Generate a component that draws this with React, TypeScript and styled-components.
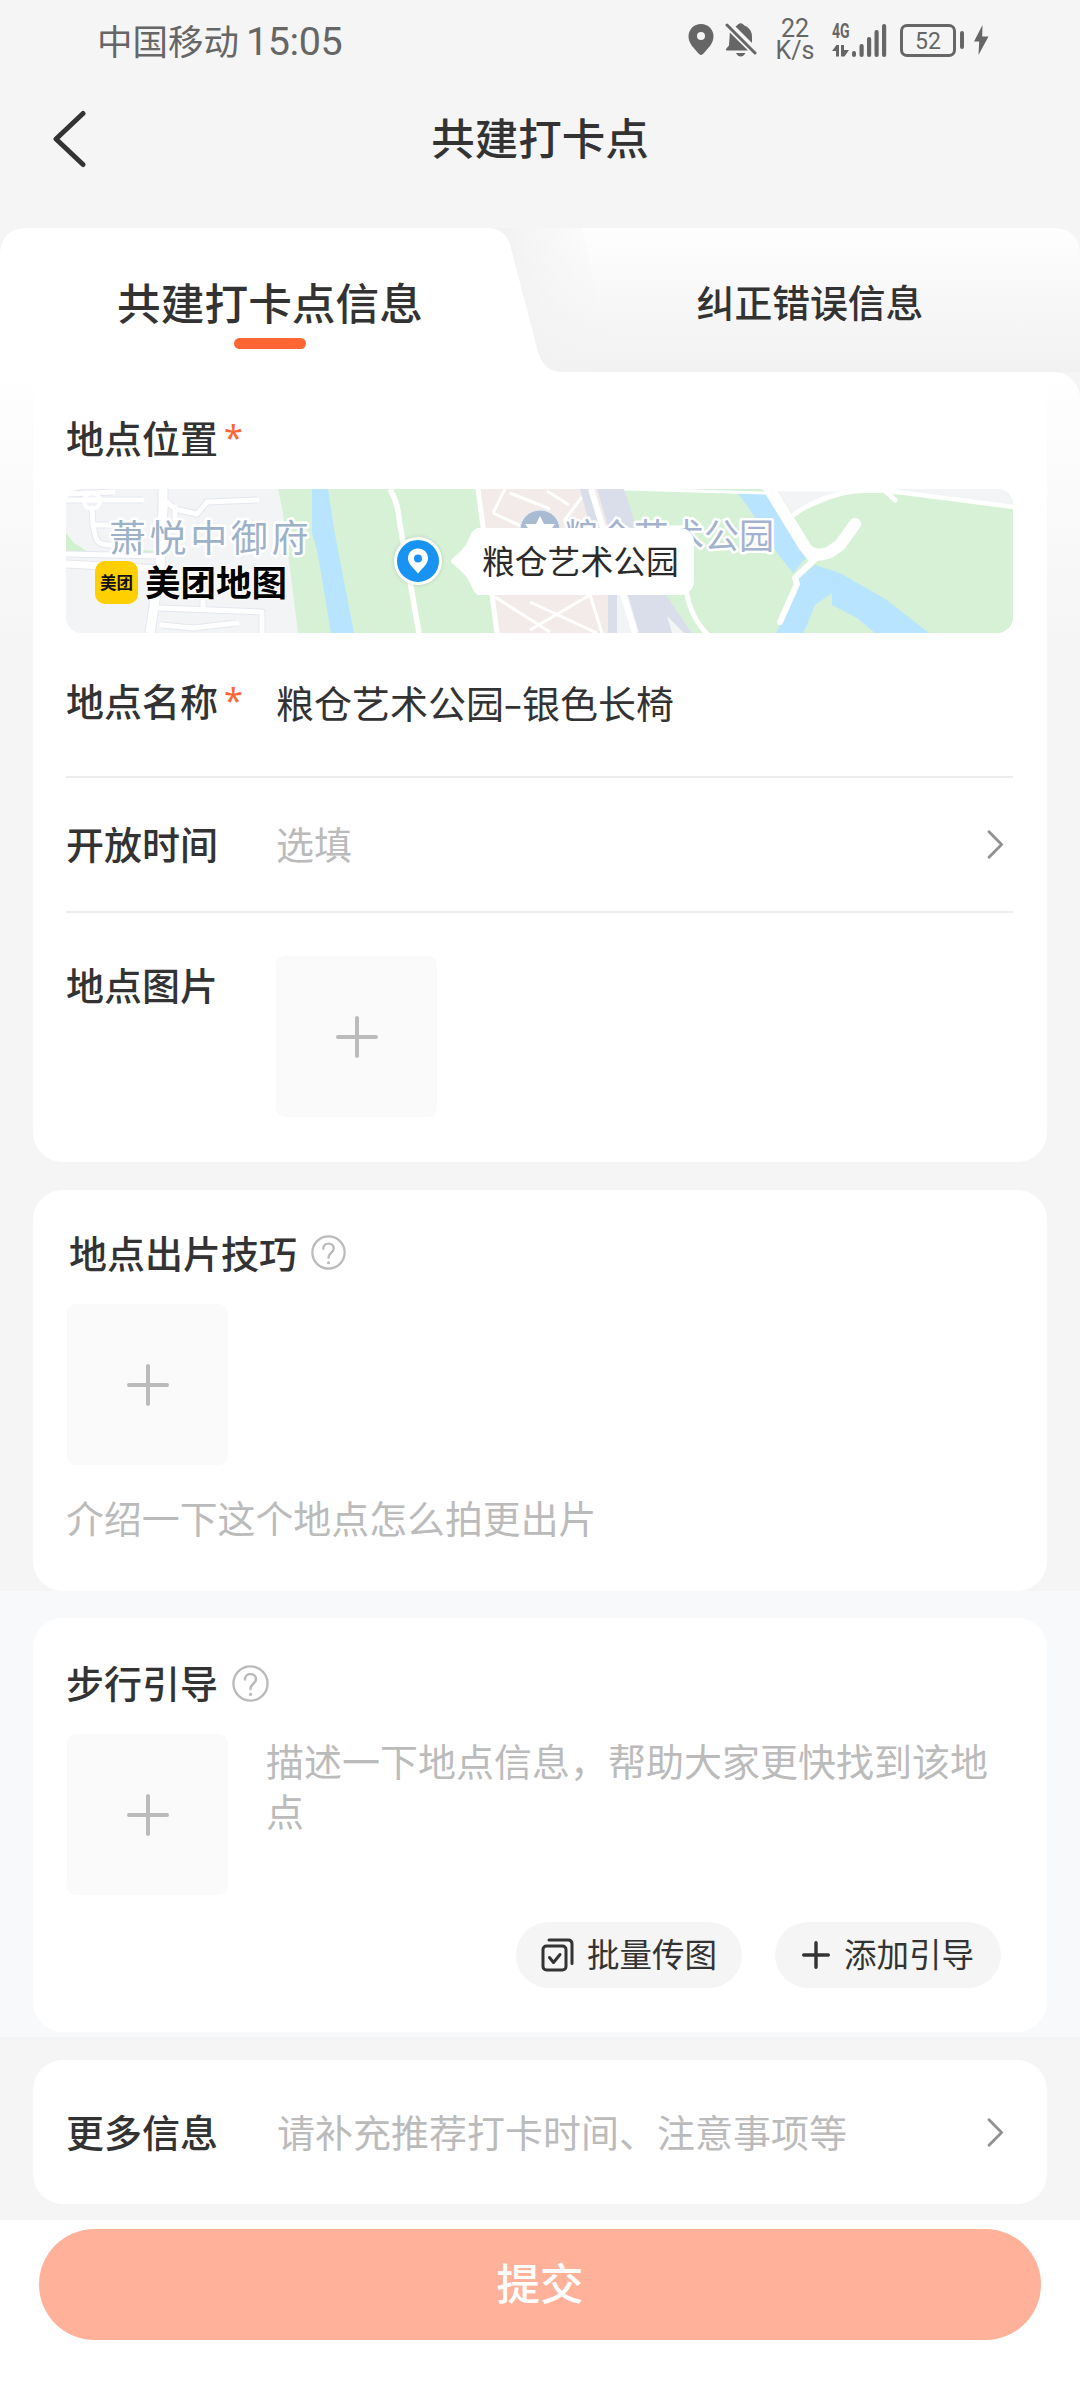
import React from "react";
import styled, { createGlobalStyle } from "styled-components";

const INK = "#333333";
const HINT = "#bbbbbb";
const BRAND = "#ff6633";
const GREY = "#666666";

const GlobalStyle = createGlobalStyle`
  *, *::before, *::after { box-sizing: border-box; }
  body {
    margin: 0;
    background: #ffffff;
    font-family: "Noto Sans CJK SC", "Noto Sans", sans-serif;
    color: ${INK};
  }
  button { font: inherit; color: inherit; border: 0; padding: 0; background: none; }
  svg { display: block; flex: none; }
`;

const Page = styled.div`
  width: 1080px;
  height: 2400px;
  display: flex;
  flex-direction: column;
  background: #f5f5f5;
  overflow: hidden;
`;

/* ---------- status bar ---------- */

const StatusBar = styled.header`
  display: flex;
  justify-content: space-between;
  height: 80px;
  padding: 0 91px 0 97px;
  color: ${GREY};
`;

const Carrier = styled.div`
  display: flex;
  align-items: center;
  gap: 7px;
  font-size: 35.5px;
  line-height: 78px;
`;

const Clock = styled.span`
  font-family: Roboto, sans-serif;
  font-size: 39.5px;
  padding-top: 4px;
  letter-spacing: -0.4px;
`;

const StatusIcons = styled.div`
  display: flex;
  height: 80px;
  align-items: center;
`;

const NetSpeed = styled.div`
  width: 44px;
  margin: 0 15px 0 16px;
  font-family: Roboto, sans-serif;
  font-size: 25px;
  line-height: 22px;
  text-align: center;
  white-space: nowrap;
`;

const Signal = styled.div`
  display: flex;
  align-items: flex-end;
  gap: 2px;
  height: 34px;
  margin-right: 13px;
`;

const Network = styled.div`
  display: flex;
  flex-direction: column;
  align-items: flex-start;
  gap: 6px;
  width: 17px;
`;

const NetworkName = styled.span`
  font-family: Roboto, sans-serif;
  font-size: 20px;
  font-weight: 700;
  line-height: 16px;
  transform: scaleX(0.7);
  transform-origin: left;
`;

const Battery = styled.div`
  display: flex;
  align-items: center;
  gap: 4px;
  margin-right: 9px;
`;

const BatteryBody = styled.div`
  width: 56px;
  height: 33px;
  border: 3px solid ${GREY};
  border-radius: 7px;
  font-family: Roboto, sans-serif;
  font-size: 23px;
  line-height: 29px;
  text-align: center;
`;

const BatteryCap = styled.div`
  width: 4px;
  height: 18px;
  border-radius: 2px;
  background: ${GREY};
`;

/* ---------- navigation ---------- */

const NavBar = styled.nav`
  display: grid;
  grid-template-columns: 120px 1fr 120px;
  height: 148px;
`;

const BackButton = styled.button`
  display: flex;
  align-items: flex-start;
  padding: 30px 0 0 50px;
`;

const NavTitle = styled.h1`
  margin: 0;
  text-align: center;
  font-size: 43.5px;
  line-height: 114px;
  font-weight: 500;
`;

const Tabs = styled.div`
  display: flex;
  position: relative;
  height: 144px;
  flex: none;
`;

const TabShape = styled.svg`
  position: absolute;
  left: 0;
  top: 0;
`;

const Tab = styled.button<{ $active?: boolean }>`
  position: relative;
  width: 540px;
  display: flex;
  flex-direction: column;
  align-items: center;
  font-weight: 500;
  font-size: ${(p) => (p.$active ? "43.7px" : "37.8px")};
  line-height: 60px;
  padding-top: 43px;
  text-align: center;
`;

const TabUnderline = styled.span`
  width: 72px;
  height: 11px;
  margin-top: 7px;
  border-radius: 6px;
  background: ${BRAND};
`;

/* ---------- form ---------- */

const Form = styled.main`
  flex: none;
  height: 1848px;
  border-top-right-radius: 26px;
  background: linear-gradient(#ffffff 0, #fefefe 14px, #f5f5f5 270px);
`;

const Card = styled.section<{ $h: number; $flat?: boolean }>`
  display: flex;
  flex-direction: column;
  height: ${(p) => p.$h}px;
  margin: 0 33px;
  padding: 0 34px 0 33px;
  border-radius: ${(p) => (p.$flat ? "0 0 30px 30px" : "30px")};
  background: #ffffff;
`;

const Gap = styled.div<{ $h: number }>`
  height: ${(p) => p.$h}px;
`;

const TintBand = styled.div`
  height: 446px;
  padding-top: 27px;
  background: #f7f9fb;
`;

const Label = styled.div<{ $w?: number }>`
  display: flex;
  width: ${(p) => (p.$w ? `${p.$w}px` : "auto")};
  flex: none;
  font-size: 38px;
  line-height: 56px;
  font-weight: 500;
  white-space: nowrap;
`;

const Required = styled.span`
  margin-left: 6px;
  font-family: "Noto Sans", sans-serif;
  font-size: 34px;
  line-height: 56px;
  font-weight: 400;
  color: ${BRAND};
`;

const LocationHead = styled.div`
  height: 117px;
  padding-top: 37px;
`;

const Row = styled.div<{ $h: number; $top: number; $line?: boolean }>`
  display: flex;
  align-items: flex-start;
  height: ${(p) => p.$h}px;
  padding-top: ${(p) => p.$top}px;
  border-bottom: ${(p) => (p.$line ? "2px solid #ededed" : "0")};
`;

const Value = styled.div<{ $hint?: boolean; $down?: number }>`
  flex: 1;
  padding-top: ${(p) => p.$down ?? 0}px;
  font-size: 38px;
  line-height: 56px;
  white-space: nowrap;
  color: ${(p) => (p.$hint ? HINT : INK)};
`;

const Dash = styled.span`
  display: inline-block;
  width: 18px;
  text-align: center;
  transform: scaleX(1.5);
`;

const ArrowSlot = styled.div`
  padding: 15px 9px 0 0;
`;

const UploadBox = styled.button`
  display: flex;
  align-items: center;
  justify-content: center;
  flex: none;
  width: 161px;
  height: 161px;
  border-radius: 9px;
  background: #fafafa;
`;

const SectionHead = styled.div<{ $top: number; $h: number; $left?: number }>`
  display: flex;
  align-items: flex-start;
  gap: 14px;
  height: ${(p) => p.$h}px;
  padding: ${(p) => p.$top}px 0 0 ${(p) => p.$left ?? 0}px;
`;

const HelpSlot = styled.div`
  padding-top: 11px;
`;

const TipText = styled.p`
  margin: 24px 0 0;
  font-size: 37.9px;
  line-height: 56px;
  color: ${HINT};
`;

const GuideRow = styled.div`
  display: flex;
  gap: 38px;
  padding-left: 1px;
`;

const GuideText = styled.p`
  margin: 1px 0 0;
  width: 730px;
  font-size: 38px;
  line-height: 50px;
  color: ${HINT};
  word-break: break-all;
`;

const GuideActions = styled.div`
  display: flex;
  justify-content: flex-end;
  gap: 33px;
  margin: 27px 12px 0 0;
`;

const Pill = styled.button<{ $gap: number }>`
  display: flex;
  align-items: center;
  justify-content: center;
  gap: ${(p) => p.$gap}px;
  width: 226px;
  height: 66px;
  border-radius: 33px;
  background: #f5f5f5;
  font-size: 32.5px;
  line-height: 60px;
  white-space: nowrap;
`;

const PillText = styled.span`
  height: 64px;
`;

/* ---------- map ---------- */

const MapBox = styled.div`
  position: relative;
  width: 947px;
  height: 144px;
  border-radius: 16px;
  overflow: hidden;
  background: #f3f4f6;
`;

const MapLogo = styled.div`
  position: absolute;
  left: 29px;
  top: 72px;
  display: flex;
  align-items: center;
  gap: 7px;
`;

const LogoTile = styled.span`
  width: 43px;
  height: 43px;
  border-radius: 10px;
  background: #ffcf00;
  color: #111111;
  font-size: 16.5px;
  font-weight: 700;
  line-height: 42px;
  text-align: center;
`;

const LogoName = styled.span`
  font-size: 35.5px;
  line-height: 40px;
  font-weight: 700;
  color: #000000;
  margin-top: -4px;
  text-shadow: 0 0 3px #fff, 0 0 3px #fff, 0 0 2px #fff;
`;

const MapPin = styled.div`
  position: absolute;
  left: 328px;
  top: 48px;
  width: 48px;
  height: 48px;
  display: flex;
  align-items: center;
  justify-content: center;
  border: 3px solid #ffffff;
  border-radius: 50%;
  background: #1893f2;
  box-shadow: 0 0 4px rgba(0, 0, 0, 0.15);
`;

const Bubble = styled.div`
  position: absolute;
  left: 385px;
  top: 39px;
  display: flex;
  height: 67px;
`;

const BubbleText = styled.span`
  width: 216px;
  padding-left: 4px;
  border-radius: 0 14px 14px 0;
  background: #ffffff;
  color: #2b2b2b;
  font-size: 32.8px;
  line-height: 63px;
  white-space: nowrap;
`;

/* ---------- footer ---------- */

const Footer = styled.footer`
  flex: 1;
  padding: 9px 39px 0;
  background: #ffffff;
`;

const Submit = styled.button`
  width: 1002px;
  height: 111px;
  border-radius: 56px;
  background: #ffb299;
  color: #ffffff;
  font-size: 43.5px;
  line-height: 106px;
  font-weight: 500;
  padding-bottom: 5px;
`;

const PlusIcon = ({ size, weight, color }: { size: number; weight: number; color: string }) => (
  <svg width={size} height={size} viewBox={`0 0 ${size} ${size}`}>
    <path
      d={`M${size / 2} ${weight / 2}V${size - weight / 2}M${weight / 2} ${size / 2}H${size - weight / 2}`}
      stroke={color}
      strokeWidth={weight}
      strokeLinecap="round"
    />
  </svg>
);

const HelpIcon = ({ size }: { size: number }) => (
  <svg width={size} height={size} viewBox="0 0 36 36" fill="none" stroke={HINT} strokeLinecap="round">
    <circle cx="18" cy="18" r="16.6" strokeWidth="2.3" />
    <path d="M12.6 14.2C12.6 10.8 14.8 8.8 18 8.8S23.4 11 23.4 13.8C23.4 18 18 18.2 18 23.4" strokeWidth="2.4" />
    <circle cx="18" cy="28.6" r="1.6" fill={HINT} stroke="none" />
  </svg>
);

const Arrow = () => (
  <svg width="17" height="29" viewBox="0 0 17 29" fill="none">
    <path d="M2 1.8L14.6 14.5L2 27.2" stroke="#919191" strokeWidth="2.8" strokeLinecap="round" strokeLinejoin="round" />
  </svg>
);

const Upload = () => (
  <UploadBox>
    <PlusIcon size={42} weight={4} color={HINT} />
  </UploadBox>
);

const PinGlyph = () => (
  <svg width="22" height="26" viewBox="0 0 22 26">
    <path
      fillRule="evenodd"
      fill="#fff"
      d="M11 .5C5.2.5 1 4.800 1 10.200C1 16 6.500 19.800 11 25.500C15.500 19.800 21 16 21 10.200C21 4.800 16.800.5 11 .5ZM11 6.500A4 4 0 1 1 11 14.500A4 4 0 1 1 11 6.500Z"
    />
  </svg>
);

const leftRoads = [
  "M0 11H76",
  "M0 5L47 3",
  "M26 19Q27 44 31 51Q34 56 44 56",
  "M27 36H46",
  "M101 13L109 20L131 25L141 13L191 11",
  "M109 18V34",
  "M94 119L196 123V144",
  "M137 108V119",
  "M96 136L127 139L171 134",
  "M0 65L94 67",
];

const MapArt = () => (
  <svg width="947" height="144" viewBox="0 0 947 144" fill="none">
    <rect width="947" height="144" fill="#f3f4f6" />
    <path d="M0 44L8 54L22 63H0ZM70 60L88 62V66H70Z" fill="#d2efd0" />
    <g stroke="#e4e7ee" strokeWidth="7" strokeLinejoin="round">
      {leftRoads.map((d) => (
        <path key={d} d={d} />
      ))}
    </g>
    <path d="M97 0L97 20L94 78L84 144" stroke="#e4e7ee" strokeWidth="11" />
    <path d="M0 75L96 80" stroke="#e4e7ee" strokeWidth="9" />
    <circle cx="26" cy="12" r="8" fill="#f0f1f4" stroke="#fff" strokeWidth="4" />
    <g stroke="#fff" strokeWidth="5" strokeLinejoin="round" strokeLinecap="round">
      {leftRoads.map((d) => (
        <path key={d} d={d} />
      ))}
    </g>
    <path d="M97 0L97 20L94 78L84 144" stroke="#fff" strokeWidth="9" />
    <path d="M0 75L96 80" stroke="#fff" strokeWidth="7" />

    <path d="M212 0L217 24L232 144H431L412 0Z" fill="#d7f1d6" />
    <path d="M246 0H262L268 40L288 144H265L251 61L246 44Z" fill="#b8e4ff" />
    <path d="M324 0Q332 14 333 30L346 104L353 144" stroke="#fff" strokeWidth="5.500" />

    <path d="M412 0H540L590 144H431Z" fill="#f3ebe9" />
    <path d="M439 0L427 24M444 4L484 20M481 2L503 16M516 8L498 32M427 24L470 44" stroke="#fff" strokeWidth="3" />
    <path d="M429 108L484 143M464 113L531 144M464 141L524 106L536 144" stroke="#fff" strokeWidth="3" />
    <path d="M412 0L431 144" stroke="#fff" strokeWidth="5" />
    <path d="M514 0H523L551 100V144H542V106Z" fill="#d9deea" />
    <path d="M551 106H566L575 144H551Z" fill="#f3f4f6" />
    <path d="M531 0H560L601 106L626 144H573Z" fill="#d9deea" />
    <path d="M525 0L569 144" stroke="#fff" strokeWidth="6" />
    <path d="M601 127L618 144H606Z" fill="#f3f4f6" />

    <path d="M558 0H947V144H626L600 106L572 42Z" fill="#d7f1d6" />
    <path d="M711 0H947V18L830 4L780 4L727 26Z" fill="#f3f4f6" />
    <path d="M671 3L700 3L740 69L727 84L711 64L697 41L682 18Z" fill="#b8e4ff" />
    <path
      d="M749 76L774 84L821 111L863 144H809L791 129L766 116V104L749 116L741 136L737 144H710L717 131L731 91Z"
      fill="#b8e4ff"
    />
    <path d="M558 0L700 4" stroke="#fff" strokeWidth="3" />
    <path d="M700 1H830" stroke="#fff" strokeWidth="3" />
    <path d="M725 28Q745 12 770 6Q795 -1 830 3Q880 9 947 18" stroke="#fff" strokeWidth="4.500" />
    <path d="M817 0L829 11" stroke="#fff" strokeWidth="5" strokeLinecap="round" />
    <path d="M701 -4L739 58Q747 70 764 63L774 56L789 35" stroke="#fff" strokeWidth="12" strokeLinecap="round" strokeLinejoin="round" />
    <path d="M738 66L750 66L752 72L746 76Z" fill="#fff" />
    <path d="M746 73L729 89L731 95L714 133" stroke="#fff" strokeWidth="6" strokeLinecap="round" strokeLinejoin="round" />
    <path d="M620 100Q624 128 642 146" stroke="#fff" strokeWidth="5" />

    <circle cx="474" cy="41" r="20" fill="#a9bad3" stroke="#e9edf3" />
    <path d="M474 27L478 35L489 35L483 43H465L459 35L470 35Z" fill="#fff" />
    <g fontFamily="Noto Sans CJK SC, sans-serif" stroke="#fff" strokeWidth="5" strokeLinejoin="round" paintOrder="stroke">
      <text x="43" y="62.500" fontSize="37" letterSpacing="3.600" fill="#9db2c8">萧悦中御府</text>
      <text x="498" y="59.500" fontSize="35" fill="#a3b3cf">粮仓艺术公园</text>
    </g>
  </svg>
);

const LocationMap = () => (
  <MapBox>
    <MapArt />
    <MapLogo>
      <LogoTile>美团</LogoTile>
      <LogoName>美团地图</LogoName>
    </MapLogo>
    <MapPin>
      <PinGlyph />
    </MapPin>
    <Bubble>
      <svg width="27" height="67" viewBox="0 0 27 67">
        <path d="M27 0Q22 1 19 8Q16 17 9 24L1 31Q-1 33 1 35L9 42Q16 48 20 57Q23 65 27 67Z" fill="#fff" />
      </svg>
      <BubbleText>粮仓艺术公园</BubbleText>
    </Bubble>
  </MapBox>
);

const StatusGlyphs = () => (
  <StatusIcons>
    <svg width="26" height="34" viewBox="0 0 26 34">
      <path
        fillRule="evenodd"
        fill={GREY}
        d="M13 1C6 1 .5 6.500 .5 13.300C.5 21 6.500 25.500 10.500 30.600Q13 33.500 15.500 30.600C19.500 25.500 25.500 21 25.500 13.300C25.500 6.500 20 1 13 1ZM13 9A4 4 0 1 1 13 17A4 4 0 1 1 13 9Z"
      />
    </svg>
    <svg width="32" height="36" viewBox="0 0 32 36" style={{ marginLeft: 11 }}>
      <path d="M2 3L30 31" stroke={GREY} strokeWidth="3" strokeLinecap="round" />
      <path d="M4.800 10.500L23 28.600H1.500Q0 27.500 1.600 26.300L4 23.500Q4.600 16 4.800 10.500Z" fill={GREY} />
      <path d="M10.500 4.500Q12.500 3.300 13.200 2.200Q15.500 .2 18 2.200Q19 3.600 21.500 4.600Q27 8 27 15V21Z" fill={GREY} />
      <path d="M11 31H20.500Q18.500 34.500 15.700 34.500T11 31Z" fill={GREY} />
    </svg>
    <NetSpeed>
      22
      <br />
      K/s
    </NetSpeed>
    <Signal>
      <Network>
        <NetworkName>4G</NetworkName>
        <svg width="17" height="12" viewBox="0 0 17 12" fill={GREY}>
          <path d="M0 6L4.500 0H7V11.500H4V6ZM9 0H12V5H17L12.500 11.500H9Z" />
        </svg>
      </Network>
      <svg width="36" height="33" viewBox="0 0 36 33" fill={GREY}>
        <rect x="1" y="27" width="4" height="6" rx="2" />
        <rect x="8.500" y="20" width="4.200" height="13" rx="2" />
        <rect x="16" y="13" width="4.200" height="20" rx="2" />
        <rect x="23.500" y="6" width="4.200" height="27" rx="2" />
        <rect x="31" y="0" width="4.200" height="33" rx="2" />
      </svg>
    </Signal>
    <Battery>
      <BatteryBody>52</BatteryBody>
      <BatteryCap />
    </Battery>
    <svg width="16" height="30" viewBox="0 0 16 30">
      <path d="M9.500 0L1 16.500H6.200L5.500 30L15.500 11.500H9.200Z" fill={GREY} />
    </svg>
  </StatusIcons>
);

export default function App() {
  return (
    <>
      <GlobalStyle />
      <Page>
        <StatusBar>
          <Carrier>
            中国移动<Clock>15:05</Clock>
          </Carrier>
          <StatusGlyphs />
        </StatusBar>

        <NavBar>
          <BackButton aria-label="返回">
            <svg width="38" height="58" viewBox="0 0 38 58" fill="none">
              <path d="M33 3.500L6 29L33 54.500" stroke={INK} strokeWidth="5" strokeLinecap="round" strokeLinejoin="round" />
            </svg>
          </BackButton>
          <NavTitle>共建打卡点</NavTitle>
        </NavBar>

        <Tabs>
          <TabShape width="1080" height="176" viewBox="0 0 1080 176">
            <defs>
              <linearGradient id="idle" x1="0" y1="0" x2="0" y2="1">
                <stop offset="0" stopColor="#fefefe" />
                <stop offset="1" stopColor="#f1f1f1" />
              </linearGradient>
              <linearGradient id="shade" x1="0" y1="0" x2="1" y2="0">
                <stop offset="0" stopColor="#f0f0f0" />
                <stop offset="1" stopColor="#f4f4f4" stopOpacity="0" />
              </linearGradient>
            </defs>
            <path d="M490 0H1052Q1080 0 1080 28V144H490Z" fill="url(#idle)" />
            <path d="M490 0H582L615 144H530Z" fill="url(#shade)" />
            <path d="M0 144V28Q0 0 28 0H488Q506 0 511 20L538 124Q544 144 562 144Z" fill="#fff" />
          </TabShape>
          <Tab $active>
            共建打卡点信息
            <TabUnderline />
          </Tab>
          <Tab>纠正错误信息</Tab>
        </Tabs>

        <Form>
          <Card $h={790} $flat>
            <LocationHead>
              <Label>
                地点位置<Required>*</Required>
              </Label>
            </LocationHead>
            <LocationMap />
            <Row $h={145} $top={39} $line>
              <Label $w={210}>
                地点名称<Required>*</Required>
              </Label>
              <Value $down={2}>
                粮仓艺术公园<Dash>-</Dash>银色长椅
              </Value>
            </Row>
            <Row $h={135} $top={37} $line>
              <Label $w={210}>开放时间</Label>
              <Value $hint>选填</Value>
              <ArrowSlot>
                <Arrow />
              </ArrowSlot>
            </Row>
            <Row $h={210} $top={43}>
              <Label $w={210}>地点图片</Label>
              <Upload />
            </Row>
          </Card>
          <Gap $h={28} />
          <Card $h={401}>
            <SectionHead $top={34} $h={114} $left={3}>
              <Label>地点出片技巧</Label>
              <HelpSlot>
                <HelpIcon size={35} />
              </HelpSlot>
            </SectionHead>
            <GuideRow>
              <Upload />
            </GuideRow>
            <TipText>介绍一下这个地点怎么拍更出片</TipText>
          </Card>
          <TintBand>
            <Card $h={414}>
              <SectionHead $top={36} $h={116}>
                <Label>步行引导</Label>
                <HelpSlot>
                  <HelpIcon size={37} />
                </HelpSlot>
              </SectionHead>
              <GuideRow>
                <Upload />
                <GuideText>描述一下地点信息，帮助大家更快找到该地点</GuideText>
              </GuideRow>
              <GuideActions>
                <Pill $gap={13}>
                  <svg width="33" height="34" viewBox="0 0 33 34" fill="none" stroke={INK} strokeWidth="3" strokeLinecap="round" strokeLinejoin="round">
                    <rect x="2" y="8" width="23" height="24" rx="3.500" />
                    <path d="M8 2H27Q31 2 31 6V25.500M8.500 19.500L12.500 24.500L19 16.500" />
                  </svg>
                  <PillText>批量传图</PillText>
                </Pill>
                <Pill $gap={14}>
                  <PlusIcon size={28} weight={3.4} color={INK} />
                  <PillText>添加引导</PillText>
                </Pill>
              </GuideActions>
            </Card>
          </TintBand>
          <Gap $h={23} />
          <Card $h={144}>
            <Row $h={144} $top={43}>
              <Label $w={211}>更多信息</Label>
              <Value $hint>请补充推荐打卡时间、注意事项等</Value>
              <ArrowSlot>
                <Arrow />
              </ArrowSlot>
            </Row>
          </Card>
        </Form>

        <Footer>
          <Submit>提交</Submit>
        </Footer>
      </Page>
    </>
  );
}
